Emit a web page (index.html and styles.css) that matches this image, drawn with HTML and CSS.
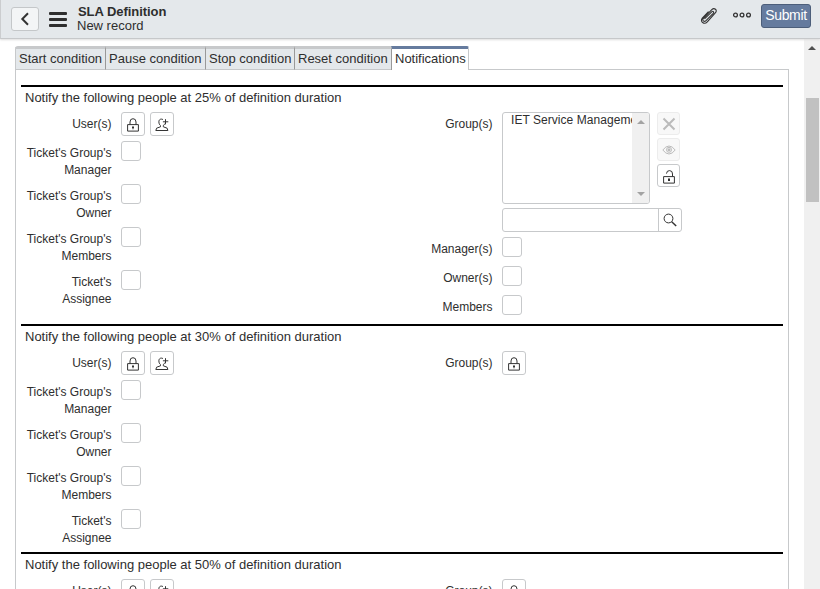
FILE: index.html
```html
<!DOCTYPE html>
<html lang="en">
<head>
<meta charset="utf-8">
<title>SLA Definition</title>
<link rel="stylesheet" href="styles.css">
</head>
<body>
<svg class="defs" aria-hidden="true">
  <symbol id="lock" viewBox="0 0 12 14"><path d="M.6 6.600h10.800v6.500H.6zM3 6.500V4a3 3.300 0 0 1 6 0v2.500" /><path class="dot" d="M5 8.500h2v1.300l-.5.5v1h-1v-1L5 9.800z"/></symbol>
  <symbol id="unlock" viewBox="0 0 12 14"><path d="M.6 6.600h10.800v6.500H.6zM9.500 6.500V4a3 3.200 0 0 0-6-.4" /><path class="dot" d="M5 8.500h2v2.500H5z"/></symbol>
  <symbol id="adduser" viewBox="0 0 14 14"><path d="M8 1.600C5.700.3 3.700 1.700 3.900 4c0 1.700.7 2.900 1.600 3.600v1.200L1.600 10.200.8 12.500h12.100l-.8-2.300-3.800-1.400V7.600c.8-.5 1.200-1.100 1.400-1.900M10.500 1.200v5.200M7.900 3.800h5.400"/></symbol>
</svg>
<header class="bar">
  <button class="back"><svg width="10" height="14" viewBox="0 0 10 14"><path d="M8 1.200 2.300 7 8 12.800"/></svg></button>
  <div class="menu"><i></i><i></i><i></i></div>
  <div class="title"><b>SLA Definition</b><span>New record</span></div>
  <svg class="clip" width="20" height="20" viewBox="0 0 20 20"><path d="M5.500 12.800 12.700 5.800c1.300-1.200 2.700.2 1.500 1.500L7 14.700c-1.800 1.800-4.400-.4-2.600-2.300L12.800 3.600c2.500-2.400 6 .5 3.700 3.100L8.300 15.800c-3 3.300-7.800-.1-5-3.600L9.500 5.500"/></svg>
  <svg class="more" width="20" height="8" viewBox="0 0 20 8"><circle cx="3.500" cy="4" r="1.900"/><circle cx="10" cy="4" r="1.900"/><circle cx="16.500" cy="4" r="1.900"/></svg>
  <button class="submit">Submit</button>
</header>
<div class="body">
  <main>
    <nav class="tabs"><a class="t1">Start condition</a><a class="t2">Pause condition</a><a class="t3">Stop condition</a><a class="t4">Reset condition</a><a class="t5 active">Notifications</a></nav>
    <div class="panel">
      <section class="first">
        <h2>Notify the following people at 25% of definition duration</h2>
        <div class="cols">
          <div class="left">
            <div class="row users"><label>User(s)</label><button class="btn"><svg width="12" height="14"><use href="#lock"/></svg></button><button class="btn"><svg width="14" height="14"><use href="#adduser"/></svg></button></div>
            <div class="row"><label>Ticket's Group's Manager</label><span class="check"></span></div>
            <div class="row"><label>Ticket's Group's Owner</label><span class="check"></span></div>
            <div class="row"><label>Ticket's Group's Members</label><span class="check"></span></div>
            <div class="row"><label>Ticket's<br>Assignee</label><span class="check"></span></div>
          </div>
          <div class="right">
            <div class="row groups"><label>Group(s)</label>
              <div class="list"><span class="opts">IET Service Management</span><span class="listbar"><i class="up"></i><i class="down"></i></span></div>
              <div class="tools">
                <button class="sq off"><svg width="14" height="14" viewBox="0 0 14 14"><path class="x" d="m1.500 1.500 11 11m0-11-11 11"/></svg></button>
                <button class="sq off"><svg width="14" height="10" viewBox="0 0 14 10"><path d="M.8 5q6.200-8 12.400 0-6.200 8-12.400 0z"/><circle cx="7" cy="4.800" r="2.500"/><circle class="dot" cx="7" cy="4.800" r="1.500"/></svg></button>
                <button class="sq"><svg class="low" width="12" height="14"><use href="#unlock"/></svg></button>
              </div>
            </div>
            <div class="search"><span></span><button><svg width="14" height="14" viewBox="0 0 14 14"><circle cx="5.500" cy="5.500" r="4.400"/><path class="handle" d="m8.700 8.700 4.500 4.300"/></svg></button></div>
            <div class="row short"><label>Manager(s)</label><span class="check"></span></div>
            <div class="row short"><label>Owner(s)</label><span class="check"></span></div>
            <div class="row short"><label>Members</label><span class="check"></span></div>
          </div>
        </div>
      </section>
      <section>
        <h2>Notify the following people at 30% of definition duration</h2>
        <div class="cols">
          <div class="left">
            <div class="row users"><label>User(s)</label><button class="btn"><svg width="12" height="14"><use href="#lock"/></svg></button><button class="btn"><svg width="14" height="14"><use href="#adduser"/></svg></button></div>
            <div class="row"><label>Ticket's Group's Manager</label><span class="check"></span></div>
            <div class="row"><label>Ticket's Group's Owner</label><span class="check"></span></div>
            <div class="row"><label>Ticket's Group's Members</label><span class="check"></span></div>
            <div class="row"><label>Ticket's<br>Assignee</label><span class="check"></span></div>
          </div>
          <div class="right">
            <div class="row users"><label>Group(s)</label><button class="btn"><svg width="12" height="14"><use href="#lock"/></svg></button></div>
          </div>
        </div>
      </section>
      <section>
        <h2>Notify the following people at 50% of definition duration</h2>
        <div class="cols">
          <div class="left">
            <div class="row users"><label>User(s)</label><button class="btn"><svg width="12" height="14"><use href="#lock"/></svg></button><button class="btn"><svg width="14" height="14"><use href="#adduser"/></svg></button></div>
          </div>
          <div class="right">
            <div class="row users"><label>Group(s)</label><button class="btn"><svg width="12" height="14"><use href="#lock"/></svg></button></div>
          </div>
        </div>
      </section>
    </div>
  </main>
  <aside class="scroll"><i class="up"></i><i class="thumb"></i></aside>
</div>
</body>
</html>
```
FILE: styles.css
```css
* { box-sizing: border-box; }
body {
  margin: 0;
  height: 589px;
  overflow: hidden;
  display: flex;
  flex-direction: column;
  font: 12px/17px "Liberation Sans", Arial, sans-serif;
  color: #2e2e2e;
  background: #fff;
}
button { font: inherit; padding: 0; display: flex; align-items: center; justify-content: center; color: #2e2e2e; }
svg { fill: none; stroke: #333; flex: none; }
.defs { display: none; }
.dot { fill: currentColor; stroke: none; }
.bar {
  height: 39px;
  flex: none;
  display: flex;
  background: #e4e8eb;
  border-left: 1px solid #cbcdcf;
  border-bottom: 1px solid #c6c8ca;
  box-shadow: 0 1px 2px #ddd;
  padding: 0 9px 0 10px;
  z-index: 1;
}
.back { width: 28px; height: 24px; margin-top: 7px; background: #f3f5f6; border: 1px solid #c4c7c9; border-radius: 3px; }
.back svg { stroke-width: 2; }
.menu { width: 18px; margin: 12px 0 0 10px; display: flex; flex-direction: column; gap: 3px; }
.menu i { height: 3px; background: #2e2e2e; border-radius: 1px; }
.title { flex: 1; margin: 4px 0 0 11px; display: flex; flex-direction: column; font-size: 13px; line-height: 14px; }
.title b { line-height: 15px; letter-spacing: -0.05px; }
.title span { margin-left: -1px; }
.clip { margin: 6px 0 0; stroke-width: 1.1; }
.more { margin: 11px 9px 0 13px; stroke-width: 1.3; }
.submit { width: 50px; height: 24px; margin-top: 4px; padding-bottom: 1px; background: #657b9e; border: 1px solid #4c5e7a; border-radius: 3px; color: #fff; font-size: 14px; letter-spacing: -0.3px; }
.submit { letter-spacing: -0.35px; }
.body { flex: 1; min-height: 0; display: flex; }
main { flex: 1; padding: 7px 15px 0; overflow: hidden; }
.tabs { display: flex; height: 24px; margin-bottom: -1px; position: relative; }
.tabs a { border-top: 3px solid #c7c9cb; border-left: 1px solid #999; border-bottom: 1px solid #c6c8ca; background: #e4e8eb; font-size: 13px; line-height: 19px; padding-left: 3px; white-space: nowrap; }
.tabs .t1 { width: 90px; border-left-color: #c7c9cb; border-top-left-radius: 3px; }
.tabs .t2 { width: 100px; }
.tabs .t3 { width: 89px; }
.tabs .t4 { width: 97px; }
.tabs .t5 { width: 78px; }
.tabs .active { background: #fff; border-top-color: #657b9e; border-right: 1px solid #c7c9cb; border-bottom: 0; border-top-right-radius: 2px; }
.panel { border: 1px solid #c7c9cb; height: 600px; padding: 15px 5px 0; }
section { border-top: 2px solid #000; height: 228px; }
section.first { height: 239px; }
h2 { margin: 0 0 0 4px; font-size: 13px; font-weight: normal; line-height: 22px; height: 25px; }
.cols { display: flex; }
.left { width: 381px; }
.right { flex: 1; }
.row { display: flex; height: 43px; }
.row label { width: 90.5px; margin-right: 9.5px; padding-top: 4px; text-align: right; flex: none; }
.users { height: 29px; gap: 5px; }
.row.users label { margin-right: 4.5px; }
.btn { width: 24px; height: 24px; flex: none; background: #fff; border: 1px solid #c7c9cb; border-radius: 3px; }
.btn svg { margin: 2px 0 0; }
.low { margin-top: 2px; }
.check { width: 20px; height: 20px; border: 1px solid #c7c9cb; border-radius: 3px; }
.groups { height: 92px; margin-bottom: 4px; }
.list { width: 148px; height: 92px; border: 1px solid #c7c9cb; border-radius: 3px; display: flex; overflow: hidden; }
.opts { flex: 1; padding-left: 8px; line-height: 14px; white-space: nowrap; overflow: hidden; letter-spacing: 0.05px; }
.listbar { width: 17px; background: #f0f0f0; display: flex; flex-direction: column; justify-content: space-between; align-items: center; padding: 7px 0; }
.up, .down { border: 4px solid transparent; border-top: 0; border-bottom-color: #a3a3a3; }
.down { border-bottom: 0; border-top: 4px solid #a3a3a3; }
.tools { display: flex; flex-direction: column; gap: 3px; margin-left: 7px; }
.sq { width: 23px; height: 23px; background: #fff; border: 1px solid #c7c9cb; border-radius: 3px; }
.off { background: #f8f8f8; border-color: #ececec; color: #bbb; }
.off svg { stroke: #bbb; }
.off svg .dot { stroke: none; }
.x { stroke-width: 2; }
.search { width: 180px; height: 24px; margin: 0 0 5px 100px; display: flex; border: 1px solid #c7c9cb; border-radius: 3px; }
.search span { flex: 1; }
.search button { width: 23px; border: 0; border-left: 1px solid #c7c9cb; background: none; }
.handle { stroke-width: 1.5; }
.short { height: 29px; }
.scroll { width: 16px; background: #f0f0f0; display: flex; flex-direction: column; align-items: center; padding-top: 7px; }
.scroll .up { border-bottom-color: #505050; }
.thumb { width: 13px; height: 104px; margin: 48px 0 0 1px; background: #c1c1c1; }
```
